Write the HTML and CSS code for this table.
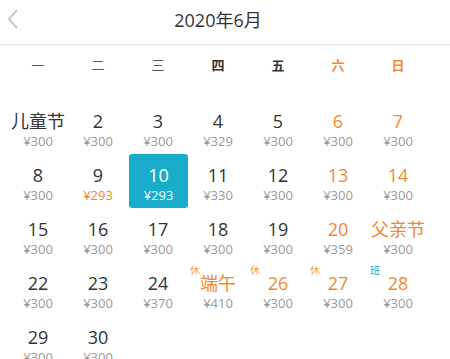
FILE: index.html
```html
<!DOCTYPE html>
<html lang="zh">
<head>
<meta charset="utf-8">
<link rel="stylesheet" href="styles.css">
</head>
<body>
<div class="header">
  <svg class="back" width="20" height="44" viewBox="0 0 20 44"><polyline points="17,10 9,19 17,28" fill="none" stroke="#bdbdbd" stroke-width="1.6"/></svg>
  <div class="title">2020年6月</div>
</div>
<div class="weekdays">
  <div>一</div><div>二</div><div>三</div><div class="dark">四</div><div class="dark">五</div><div class="wk">六</div><div class="wk">日</div>
</div>
<div class="grid">
  <div class="cell"><div class="num">儿童节</div><div class="price">¥300</div></div>
  <div class="cell"><div class="num">2</div><div class="price">¥300</div></div>
  <div class="cell"><div class="num">3</div><div class="price">¥300</div></div>
  <div class="cell"><div class="num">4</div><div class="price">¥329</div></div>
  <div class="cell"><div class="num">5</div><div class="price">¥300</div></div>
  <div class="cell wk"><div class="num">6</div><div class="price">¥300</div></div>
  <div class="cell wk"><div class="num">7</div><div class="price">¥300</div></div>

  <div class="cell"><div class="num">8</div><div class="price">¥300</div></div>
  <div class="cell"><div class="num">9</div><div class="price low">¥293</div></div>
  <div class="cell sel"><div class="num">10</div><div class="price">¥293</div></div>
  <div class="cell"><div class="num">11</div><div class="price">¥330</div></div>
  <div class="cell"><div class="num">12</div><div class="price">¥300</div></div>
  <div class="cell wk"><div class="num">13</div><div class="price">¥300</div></div>
  <div class="cell wk"><div class="num">14</div><div class="price">¥300</div></div>

  <div class="cell"><div class="num">15</div><div class="price">¥300</div></div>
  <div class="cell"><div class="num">16</div><div class="price">¥300</div></div>
  <div class="cell"><div class="num">17</div><div class="price">¥300</div></div>
  <div class="cell"><div class="num">18</div><div class="price">¥300</div></div>
  <div class="cell"><div class="num">19</div><div class="price">¥300</div></div>
  <div class="cell wk"><div class="num">20</div><div class="price">¥359</div></div>
  <div class="cell wk"><div class="num">父亲节</div><div class="price">¥300</div></div>

  <div class="cell"><div class="num">22</div><div class="price">¥300</div></div>
  <div class="cell"><div class="num">23</div><div class="price">¥300</div></div>
  <div class="cell"><div class="num">24</div><div class="price">¥370</div></div>
  <div class="cell wk"><span class="badge rest">休</span><div class="num">端午</div><div class="price">¥410</div></div>
  <div class="cell wk"><span class="badge rest">休</span><div class="num">26</div><div class="price">¥300</div></div>
  <div class="cell wk"><span class="badge rest">休</span><div class="num">27</div><div class="price">¥300</div></div>
  <div class="cell wk"><span class="badge work">班</span><div class="num">28</div><div class="price">¥300</div></div>

  <div class="cell"><div class="num">29</div><div class="price">¥300</div></div>
  <div class="cell"><div class="num">30</div><div class="price">¥300</div></div>
</div>
</body>
</html>
```
FILE: styles.css
```css
html, body {
  margin: 0;
  padding: 0;
  background: #fff;
  font-family: "Open Sans", "Noto Sans CJK SC", sans-serif;
  color: #333;
  overflow: hidden;
}
.header {
  position: relative;
  height: 45px;
  box-sizing: border-box;
  padding-bottom: 7px;
  border-bottom: 1px solid #e6e6e6;
  box-shadow: 0 1px 2px rgba(0,0,0,0.04);
  display: flex;
  align-items: center;
  justify-content: center;
}
.back {
  position: absolute;
  left: 0;
  top: 0;
}
.title {
  font-size: 18px;
  color: #333;
  margin-left: -14px;
}
.weekdays {
  display: grid;
  grid-template-columns: repeat(7, 60px);
  padding-left: 8px;
  height: 42px;
  align-items: center;
  font-family: "Noto Sans CJK SC", sans-serif;
  font-size: 13px;
  color: #555;
  margin-bottom: 13px;
}
.weekdays > div { text-align: center; padding-bottom: 3px; }
.weekdays .dark { color: #333; font-weight: bold; }
.weekdays .wk { color: #f0892e; font-weight: bold; }
.grid {
  display: grid;
  grid-template-columns: repeat(7, 60px);
  grid-auto-rows: 54px;
  padding-left: 8px;
}
.cell {
  position: relative;
  text-align: center;
  padding-top: 10px;
  box-sizing: border-box;
  border-radius: 3px;
}
.num {
  font-size: 18px;
  line-height: 22px;
  color: #333;
  font-family: "Open Sans", "Noto Sans CJK SC", sans-serif;
}
.price {
  font-size: 13px;
  line-height: 18px;
  color: #999;
}
.price.low { color: #f0892e; }
.cell.wk .num { color: #f0892e; }
.cell.sel { background: #19adcc; margin: 0 0 0 1px; padding-top: 10px; }
.cell.sel .num, .cell.sel .price { color: #fff; }
.badge {
  position: absolute;
  left: 2px;
  top: 2px;
  font-size: 10px;
  line-height: 12px;
  font-family: "Noto Sans CJK SC", sans-serif;
}
.badge.rest { color: #f2a84c; }
.badge.work { color: #19a9b8; }
```
